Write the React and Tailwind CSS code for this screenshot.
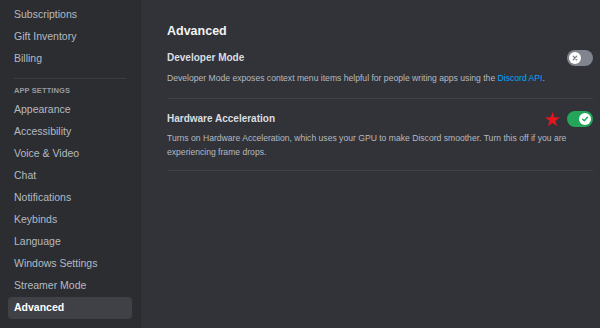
import React from 'react'

const font = { fontFamily: '"Liberation Sans", Arial, sans-serif' }

const userItems = ['Subscriptions', 'Gift Inventory', 'Billing']
const appItems = [
  'Appearance',
  'Accessibility',
  'Voice & Video',
  'Chat',
  'Notifications',
  'Keybinds',
  'Language',
  'Windows Settings',
  'Streamer Mode',
  'Advanced',
]

function NavItem({ label, active }) {
  return (
    <div
      className={`mx-2 h-[22px] flex items-center px-[6px] rounded-[4px] text-[10.5px] whitespace-nowrap
        ${active ? 'bg-[#3f4147] text-white font-bold' : 'text-[#b5bac1]'}`}
    >
      {label}
    </div>
  )
}

function Toggle({ on }) {
  return (
    <div
      className={`w-[26px] h-[16px] rounded-full flex items-center px-[2px]
        ${on ? 'bg-[#23a55a] justify-end' : 'bg-[#80848e] justify-start'}`}
    >
      <div className="w-[12px] h-[12px] rounded-full bg-white flex items-center justify-center">
        {on ? (
          <svg width="8" height="8" viewBox="0 0 8 8">
            <path d="M1.6 4.2 L3.3 5.8 L6.4 2.3" fill="none" stroke="#23a55a" strokeWidth="1.4" strokeLinecap="round" strokeLinejoin="round" />
          </svg>
        ) : (
          <svg width="8" height="8" viewBox="0 0 8 8">
            <path d="M2.3 2.3 L5.7 5.7 M5.7 2.3 L2.3 5.7" fill="none" stroke="#80848e" strokeWidth="1.3" strokeLinecap="round" />
          </svg>
        )}
      </div>
    </div>
  )
}

const Star = () => (
  <svg width="17" height="17" viewBox="0 0 24 24">
    <path
      d="M12 1.5 L14.6 8.9 L22.5 9.1 L16.2 13.9 L18.5 21.6 L12 17.1 L5.5 21.6 L7.8 13.9 L1.5 9.1 L9.4 8.9 Z"
      fill="#e5141e"
    />
  </svg>
)

export default function App() {
  return (
    <div className="w-[600px] h-[328px] flex overflow-hidden bg-[#313338]" style={font}>
      {/* ── Sidebar ── */}
      <aside className="w-[141px] shrink-0 bg-[#2b2d31] pt-[4px] border-r border-[#2a2b30]">
        {userItems.map((l) => (
          <NavItem key={l} label={l} />
        ))}
        <div className="mx-[14px] mt-2 h-px bg-[#3b3d43]" />
        <div className="h-[20px] flex items-end pb-[4px] px-[14px]">
          <span className="text-[7.5px] leading-[8px] font-bold text-[#949ba4] uppercase tracking-[0.1px]">
            App Settings
          </span>
        </div>
        {appItems.map((l) => (
          <NavItem key={l} label={l} active={l === 'Advanced'} />
        ))}
        <div className="mx-[14px] mt-[9px] h-px bg-[#3b3d43]" />
      </aside>

      {/* ── Main ── */}
      <main className="flex-1 pl-[26px] pr-[7px] pt-[23px]">
        <h1 className="text-[12.5px] leading-[16px] font-bold text-[#f2f3f5]">Advanced</h1>

        <div className="mt-[11px] h-[16px] flex items-center justify-between">
          <span className="text-[10px] leading-[14px] font-bold text-[#dbdee1]">Developer Mode</span>
          <Toggle on={false} />
        </div>
        <p className="mt-[5px] text-[8.6px] leading-[14px] text-[#b5bac1]">
          Developer Mode exposes context menu items helpful for people writing apps using the{' '}
          <span className="text-[#00a8fc]">Discord API</span>.
        </p>
        <div className="mt-[13px] h-px bg-[#3f4147]" />

        <div className="mt-[12px] h-[16px] flex items-center justify-between">
          <span className="text-[10px] leading-[14px] font-bold text-[#dbdee1]">Hardware Acceleration</span>
          <div className="flex items-center gap-[6px]">
            <Star />
            <Toggle on />
          </div>
        </div>
        <p className="mt-[4px] text-[8.6px] leading-[14px] text-[#b5bac1] pr-[24px]">
          Turns on Hardware Acceleration, which uses your GPU to make Discord smoother. Turn this off if you are
          experiencing frame drops.
        </p>
        <div className="mt-[11px] h-px bg-[#3f4147]" />
      </main>
    </div>
  )
}
